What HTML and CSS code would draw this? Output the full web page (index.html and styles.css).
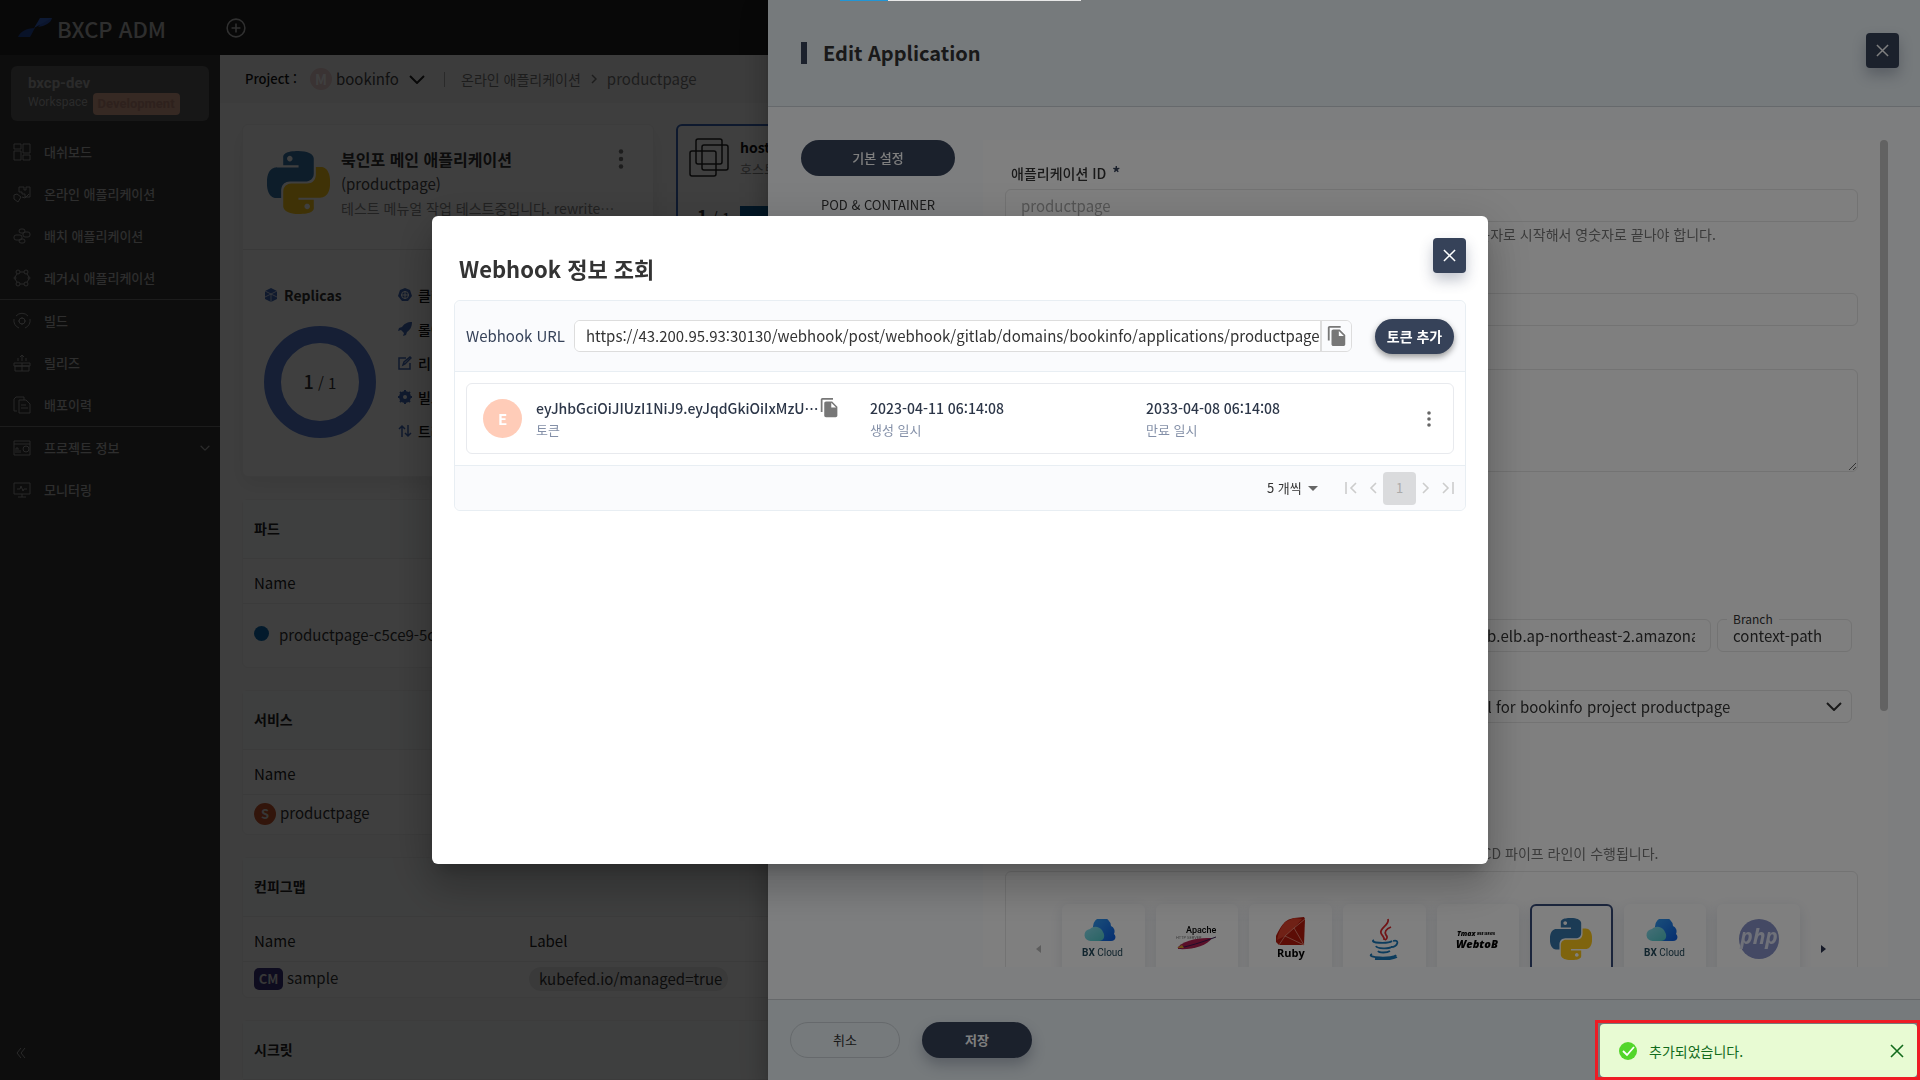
FILE: index.html
```html
<!DOCTYPE html>
<html lang="ko">
<head>
<meta charset="utf-8">
<title>BXCP ADM</title>
<link rel="stylesheet" href="styles.css">
</head>
<body>
<svg class="defs" aria-hidden="true">
  <symbol id="python" viewBox="0 0 24 24">
    <path fill="#3776ab" d="M14.25.18l.9.2.73.26.59.3.45.32.34.34.25.34.16.33.1.3.04.26.02.2-.01.13V8.5l-.05.63-.13.55-.21.46-.26.38-.3.31-.33.25-.35.19-.35.14-.33.1-.3.07-.26.04-.21.02H8.77l-.69.05-.59.14-.5.22-.41.27-.33.32-.27.35-.2.36-.15.37-.1.35-.07.32-.04.27-.02.21v3.06H3.17l-.21-.03-.28-.07-.32-.12-.35-.18-.36-.26-.36-.36-.35-.46-.32-.59-.28-.73-.21-.88-.14-1.05-.05-1.23.06-1.22.16-1.04.24-.87.32-.71.36-.57.4-.44.42-.33.42-.24.4-.16.36-.1.32-.05.24-.01h.16l.06.01h8.16v-.83H6.18l-.01-2.75-.02-.37.05-.34.11-.31.17-.28.25-.26.31-.23.38-.2.44-.18.51-.15.58-.12.64-.1.71-.06.77-.04.84-.02 1.27.05zm-6.3 1.98l-.23.33-.08.41.08.41.23.34.33.22.41.09.41-.09.33-.22.23-.34.08-.41-.08-.41-.23-.33-.33-.22-.41-.09-.41.09z"/>
    <path fill="#ffc91a" d="M21.04 6.11l.28.06.32.12.35.18.36.27.36.35.35.47.32.59.28.73.21.88.14 1.04.05 1.23-.06 1.23-.16 1.04-.24.86-.32.71-.36.57-.4.45-.42.33-.42.24-.4.16-.36.09-.32.05-.24.02-.16-.01h-8.22v.82h5.84l.01 2.76.02.36-.05.34-.11.31-.17.29-.25.25-.31.24-.38.2-.44.17-.51.15-.58.13-.64.09-.71.07-.77.04-.84.01-1.27-.04-1.07-.14-.9-.2-.73-.25-.59-.3-.45-.33-.34-.34-.25-.34-.16-.33-.1-.3-.04-.25-.02-.2.01-.13v-5.34l.05-.64.13-.54.21-.46.26-.38.3-.32.33-.24.35-.2.35-.14.33-.1.3-.06.26-.04.21-.02.13-.01h5.84l.69-.05.59-.14.5-.21.41-.28.33-.32.27-.35.2-.36.15-.36.1-.35.07-.32.04-.28.02-.21V6.07h2.09l.14.01zm-6.47 14.25l-.23.33-.08.41.08.41.23.33.33.23.41.08.41-.08.33-.23.23-.33.08-.41-.08-.41-.23-.33-.33-.23-.41-.08-.41.08z"/>
  </symbol>
  <symbol id="copy" viewBox="0 0 24 24"><path fill="currentColor" d="M16 1H4c-1.1 0-2 .9-2 2v14h2V3h12V1zm-1 4l6 6v10c0 1.1-.9 2-2 2H7.99C6.89 23 6 22.1 6 21V7c0-1.1.89-2 1.99-2h7zm-1 7h5.5L14 6.5V12z"/></symbol>
  <symbol id="close" viewBox="0 0 14 14"><path d="M1 1l12 12M13 1L1 13" fill="none" stroke="currentColor" stroke-width="1.6"/></symbol>
  <symbol id="down" viewBox="0 0 16 9"><path d="M1 1l7 7 7-7" fill="none" stroke="currentColor" stroke-width="2"/></symbol>
  <symbol id="dots" viewBox="0 0 4 16"><circle cx="2" cy="2" r="1.8" fill="currentColor"/><circle cx="2" cy="8" r="1.8" fill="currentColor"/><circle cx="2" cy="14" r="1.8" fill="currentColor"/></symbol>
  <linearGradient id="cloudDark" x1="0" y1="0" x2="1" y2="1"><stop offset="0" stop-color="#35a0f5"/><stop offset="1" stop-color="#0b5be0"/></linearGradient>
  <linearGradient id="cloudLight" x1="0" y1="0" x2="1" y2="1"><stop offset="0" stop-color="#8fe0f2"/><stop offset="1" stop-color="#4fc9c9"/></linearGradient>
  <symbol id="bxcloud" viewBox="0 0 44 40">
    <path fill="url(#cloudDark)" d="M12 8a9 9 0 0 1 18-1 6 6 0 0 1 3 8c3 3 1 7-3 7H15z"/>
    <path fill="url(#cloudLight)" d="M10 22a6 6 0 0 1-1-12 8 8 0 0 1 13 3c3 5 0 9-4 9z"/>
    <text x="1" y="37" font-size="10" fill="#234a5c" font-family="Roboto, sans-serif"><tspan font-weight="700">BX</tspan> Cloud</text>
  </symbol>
</svg>

<div class="app">
  <header class="topbar">
    <div class="brand">
      <svg width="34" height="20" viewBox="0 0 34 20"><path fill="#2c56b8" d="M22 0h12c-1 5-7 8-14 9 4-3 1-6 2-9z"/><path fill="#2348a0" d="M0 19c2-5 8-9 17-9-2 3-3 6-5 9z"/><path fill="#3464cc" d="M22 0h12L16 10z"/></svg>
      <span>BXCP ADM</span>
    </div>
    <button class="bare add" aria-label="추가"><svg width="20" height="20" viewBox="0 0 18 18" fill="none" stroke="currentColor" stroke-width="1.4"><circle cx="9" cy="9" r="8"/><path d="M9 5v8M5 9h8"/></svg></button>
  </header>

  <nav class="sidebar">
    <div class="workspace">
      <strong>bxcp-dev</strong>
      <p>Workspace <span>Development</span></p>
    </div>
    <ul>
      <li><a href="#"><svg viewBox="0 0 18 18"><path d="M1 1h7v5H1zM1 8h7v9H1zM10 1h7v9h-7zM10 12h7v5h-7z"/></svg>대쉬보드</a></li>
      <li><a href="#"><svg viewBox="0 0 18 18"><path d="M6 2h5v3h2V2h4v10h-5V9H9V7H6zM1 10l3-1 4 3-3 5-4-3zM9 12l3 1 4-4"/></svg>온라인 애플리케이션</a></li>
      <li><a href="#"><svg viewBox="0 0 18 18"><rect x="6" y="2" width="6" height="4" rx="2"/><rect x="10" y="5" width="7" height="5" rx="2"/><rect x="1" y="8" width="8" height="5" rx="2"/><rect x="6" y="12" width="6" height="4" rx="2"/></svg>배치 애플리케이션</a></li>
      <li><a href="#"><svg viewBox="0 0 18 18"><circle cx="5" cy="3" r="2"/><circle cx="13" cy="3" r="2"/><circle cx="2" cy="9" r="1"/><circle cx="16" cy="9" r="1"/><circle cx="5" cy="15" r="2"/><circle cx="13" cy="15" r="2"/><path d="M7 3h4M7 15h4M4 5L2 8M14 5l2 3M4 13l-2-3M14 13l2-3"/></svg>레거시 애플리케이션</a></li>
    </ul>
    <ul>
      <li><a href="#"><svg viewBox="0 0 18 18"><circle cx="9" cy="9" r="3"/><path d="M9 5v2M9 11v2M5 9h2M11 9h2M3 4a8 8 0 0 1 12 0M17 7a8 8 0 0 1-5 9M6 16a8 8 0 0 1-5-9"/></svg>빌드</a></li>
      <li><a href="#"><svg viewBox="0 0 18 18"><path d="M1 9h16v3H1zM2 12h14v5H2zM9 9v8M9 7V1M7 3l2-2 2 2M5 4v3M13 4v3"/></svg>릴리즈</a></li>
      <li><a href="#"><svg viewBox="0 0 18 18"><path d="M6 4h7l4 4v9H6zM4 15H1V3l2-2h8v3M8 9h5M8 12h7"/></svg>배포이력</a></li>
    </ul>
    <ul>
      <li><a href="#"><svg viewBox="0 0 18 18"><path d="M1 2h16v14H1zM1 5h16M3 14V9h2v5M7 14v-3"/><circle cx="13" cy="10" r="3"/></svg>프로젝트 정보<svg class="more" viewBox="0 0 16 9"><use href="#down"/></svg></a></li>
      <li><a href="#"><svg viewBox="0 0 18 18"><path d="M1 2h16v11H1zM5 16h8M9 13v3M4 8h3l1-3 2 5 1-2h3"/></svg>모니터링</a></li>
    </ul>
    <button class="bare collapse" aria-label="접기"><svg width="10" height="12" viewBox="0 0 10 12" fill="none" stroke="currentColor"><path d="M5 1L1 6l4 5M9 1L5 6l4 5"/></svg></button>
  </nav>

  <main class="main">
    <div class="crumbs">
      <span class="crumb-label">Project :</span>
      <span class="project-mark">M</span>
      <span class="project">bookinfo</span>
      <svg class="project-open" width="16" height="9"><use href="#down"/></svg>
      <span class="bar"></span>
      <a href="#">온라인 애플리케이션</a>
      <svg class="sep" width="6" height="10" viewBox="0 0 6 10" fill="none" stroke="currentColor" stroke-width="1.5"><path d="M1 1l4 4-4 4"/></svg>
      <span class="here">productpage</span>
    </div>

    <div class="content">
      <div class="overview">
        <section class="card app-card">
          <div class="app-head">
            <svg width="63" height="63"><use href="#python"/></svg>
            <div class="app-name">
              <h2>북인포 메인 애플리케이션</h2>
              <p>(productpage)</p>
              <p class="desc">테스트 메뉴얼 작업 테스트중입니다. rewrite⋯</p>
            </div>
            <button class="bare" aria-label="메뉴"><svg width="6" height="20"><use href="#dots"/></svg></button>
          </div>
          <div class="app-body">
            <div>
              <h3><svg width="14" height="14" viewBox="0 0 14 14"><path fill="#4169b8" d="M7 0l6 3v8l-6 3-6-3V3z"/><path d="M1 3l6 3 6-3M7 6v8M1 9l6-3 6 3" fill="none" stroke="#fff" stroke-width=".7"/></svg>Replicas</h3>
              <div class="ring"><p><b>1</b> / 1</p></div>
            </div>
            <ul class="facts">
              <li><svg viewBox="0 0 14 14"><path fill="#4169b8" d="M7 0l5 2 2 6-4 5H4L0 8l2-6z"/><g fill="none" stroke="#fff"><circle cx="7" cy="7" r="3.5"/><path d="M7 3v8M3 7h8"/></g></svg>클러스터</li>
              <li><svg viewBox="0 0 14 14"><path fill="#4169b8" d="M14 0C9 0 6 2 4 5L1 6 0 9l3-1 3 3-1 3 3-1 1-3c3-2 5-5 5-10z"/></svg>롤아웃</li>
              <li><svg viewBox="0 0 14 14" fill="none" stroke="#4169b8" stroke-width="1.5"><path d="M8 2H1v11h11V7M5 9l1-3 6-5 1 1-6 6z"/></svg>리비전</li>
              <li><svg viewBox="0 0 14 14"><circle cx="7" cy="7" r="4" fill="none" stroke="#4169b8" stroke-width="4"/><path stroke="#4169b8" stroke-width="2" d="M7 0v3M7 11v3M0 7h3M11 7h3M2 2l2 2M10 10l2 2M12 2l-2 2M4 10l-2 2"/></svg>빌드</li>
              <li><svg viewBox="0 0 14 14" fill="none" stroke="#4169b8" stroke-width="1.5"><path d="M4 13V2M1 5l3-3 3 3M10 1v11M7 9l3 3 3-3"/></svg>트래픽</li>
            </ul>
          </div>
        </section>
        <section class="card host-card">
          <div class="host-head">
            <svg width="40" height="40" viewBox="0 0 40 40" fill="none" stroke="#222" stroke-width="1.5"><rect x="7" y="1" width="26" height="25" rx="2"/><rect x="13" y="7" width="26" height="25" rx="2"/><rect x="1" y="13" width="26" height="25" rx="2"/></svg>
            <div><h3>host</h3><p>호스트</p></div>
          </div>
          <div class="host-body"><p><b>1</b> / 1</p><span></span></div>
        </section>
      </div>

      <section class="card list pods">
        <h3>파드</h3>
        <table>
          <thead><tr><th>Name</th><th></th></tr></thead>
          <tbody><tr><td><span class="dot"></span>productpage-c5ce9-5c6</td><td></td></tr></tbody>
        </table>
      </section>
      <section class="card list services">
        <h3>서비스</h3>
        <table>
          <thead><tr><th>Name</th><th></th></tr></thead>
          <tbody><tr><td><span class="kind svc">S</span>productpage</td><td></td></tr></tbody>
        </table>
      </section>
      <section class="card list maps">
        <h3>컨피그맵</h3>
        <table>
          <thead><tr><th>Name</th><th>Label</th></tr></thead>
          <tbody><tr><td><span class="kind cm">CM</span>sample</td><td><span class="tag">kubefed.io/managed=true</span></td></tr></tbody>
        </table>
      </section>
      <section class="card list"><h3>시크릿</h3></section>
    </div>
  </main>
</div>

<div class="layer layer-end">
  <aside class="drawer">
    <header class="drawer-head">
      <h1>Edit Application</h1>
      <button class="square" aria-label="닫기"><svg width="13" height="13"><use href="#close"/></svg></button>
    </header>
    <div class="drawer-body">
      <nav class="steps">
        <button class="pill">기본 설정</button>
        <button class="bare">POD &amp; CONTAINER</button>
      </nav>
      <form class="panel">
        <div class="fields">
          <div class="field"><label for="app-id">애플리케이션 ID <b>*</b></label><input id="app-id" placeholder="productpage">
            <p class="hint hint-id">영문 소문자, 숫자, 하이픈(-)만 사용할 수 있으며 영문자로 시작해서 영숫자로 끝나야 합니다.</p></div>
          <div class="field second"><label for="app-name">애플리케이션 이름</label><input id="app-name"></div>
          <div class="field third"><label for="app-desc">설명</label><textarea id="app-desc"></textarea></div>
          <div class="git">
            <label for="git-url">Git</label>
            <div class="git-row">
              <input id="git-url" value="https://gitlab-bb.elb.ap-northeast-2.amazonaws.com">
              <div class="outlined"><label for="branch">Branch</label><input id="branch" value="context-path"></div>
            </div>
            <div class="select"><select aria-label="Credential"><option>credential for bookinfo project productpage</option></select><svg width="16" height="9"><use href="#down"/></svg></div>
          </div>
          <p class="hint hint-ci">CI/CD 파이프 라인이 수행됩니다.</p>
          <div class="stacks">
            <button type="button" class="bare arrow off" aria-label="이전"><svg width="5" height="8"><path d="M5 0L0 4l5 4z" fill="currentColor"/></svg></button>
            <div class="tiles">
              <button type="button" class="tile"><svg width="44" height="40"><use href="#bxcloud"/></svg></button>
              <button type="button" class="tile"><svg width="42" height="38" viewBox="0 0 42 38"><text x="10" y="13" font-size="9" font-weight="500" font-family="Roboto, sans-serif">Apache</text><text x="0" y="19" font-size="4" fill="#777" font-family="Roboto, sans-serif">HTTP SERVER</text><path d="M2 27c8-8 22-9 34-9-5 8-20 12-34 11z" fill="#b41f52"/><path d="M4 28c9-2 20-5 36-11" stroke="#3b1a55" fill="none"/><path d="M1 28l5-3 2 3z" fill="#d8a030"/></svg></button>
              <button type="button" class="tile"><svg width="30" height="46" viewBox="0 0 30 46"><path fill="#b81a0c" d="M9 6q3-3 9-4l10-1 1 2-1 26H3L0 26V20Q4 11 9 6z"/><path fill="#e0422c" d="M9 6L18 2l8 1-8 9-9 8-8 4q2-11 8-18z"/><path d="M9 20l9-8 11-9M9 20l-6 9M9 20l19 9M18 12l10 17" stroke="#f29a88" fill="none" stroke-width=".8"/><text x="1" y="41" font-size="11" font-weight="700" font-family="Open Sans, sans-serif">Ruby</text></svg></button>
              <button type="button" class="tile"><svg width="30" height="42" viewBox="0 0 30 42" fill="none"><path d="M19 1c2 6-9 9-7 14 1 3 4 4 3 7M22 9c-5 2-7 5-5 8 2 2 1 4-1 5" stroke="#e22a2e" stroke-width="1.8"/><path d="M5 22c-6 3 14 4 18 1M7 28c1 3 13 3 15 1M9 33c1 2 9 2 12 0M3 36c-8 4 22 5 24 1M24 23c7-2 5 6-2 6M6 41c9 1 18 0 22-2" stroke="#1878ba" stroke-width="1.8"/></svg></button>
              <button type="button" class="tile"><svg width="46" height="22" viewBox="0 0 46 22" font-family="Open Sans, sans-serif" font-style="italic" font-weight="800"><text x="2" y="8" font-size="7">Tmax</text><text x="22" y="7" font-size="3">WEB SERVER</text><text x="1" y="20" font-size="11">WebtoB</text></svg></button>
              <button type="button" class="tile on"><svg width="42" height="42"><use href="#python"/></svg></button>
              <button type="button" class="tile"><svg width="44" height="40"><use href="#bxcloud"/></svg></button>
              <button type="button" class="tile"><svg width="42" height="42" viewBox="0 0 42 42"><circle cx="21" cy="21" r="20" fill="#8892c8"/><text x="21" y="26" text-anchor="middle" font-size="21" font-weight="700" font-style="italic" fill="#dfe2f2" font-family="Open Sans, sans-serif">php</text></svg></button>
            </div>
            <button type="button" class="bare arrow" aria-label="다음"><svg width="5" height="8"><path d="M0 0l5 4-5 4z" fill="currentColor"/></svg></button>
          </div>
        </div>
        <div class="scroll"></div>
      </form>
    </div>
    <footer class="drawer-foot">
      <button class="pill ghost">취소</button>
      <button class="pill save">저장</button>
    </footer>
  </aside>
</div>

<div class="layer layer-center">
  <div class="modal" role="dialog" aria-labelledby="modal-title">
    <header class="modal-head">
      <h1 id="modal-title">Webhook 정보 조회</h1>
      <button class="square" aria-label="닫기"><svg width="13" height="13"><use href="#close"/></svg></button>
    </header>
    <div class="hooks">
      <div class="hook-url">
        <label for="hook">Webhook URL</label>
        <div class="joined">
          <input id="hook" readonly value="https://43.200.95.93:30130/webhook/post/webhook/gitlab/domains/bookinfo/applications/productpage">
          <button aria-label="복사"><svg width="22" height="22"><use href="#copy"/></svg></button>
        </div>
        <button class="token-add">토큰 추가</button>
      </div>
      <div class="hook-list">
        <article class="token">
          <span class="avatar">E</span>
          <div><p class="value">eyJhbGciOiJIUzI1NiJ9.eyJqdGkiOiIxMzU⋯<button class="bare" aria-label="토큰 복사"><svg width="21" height="21"><use href="#copy"/></svg></button></p><p class="name">토큰</p></div>
          <div><p class="value">2023-04-11 06:14:08</p><p class="name">생성 일시</p></div>
          <div><p class="value">2033-04-08 06:14:08</p><p class="name">만료 일시</p></div>
          <button class="bare kebab" aria-label="메뉴"><svg width="4" height="16"><use href="#dots"/></svg></button>
        </article>
      </div>
      <div class="pager">
        <div class="page-size"><select aria-label="페이지 크기"><option>5 개씩</option></select><svg width="10" height="5" viewBox="0 0 10 5"><path d="M0 0l5 5 5-5z" fill="#666"/></svg></div>
        <button class="bare" aria-label="처음"><svg width="12" height="12" viewBox="0 0 12 12"><path d="M1 0v12M11 1L6 6l5 5"/></svg></button>
        <button class="bare" aria-label="이전"><svg width="8" height="12" viewBox="0 0 8 12"><path d="M7 1L2 6l5 5"/></svg></button>
        <button class="page">1</button>
        <button class="bare" aria-label="다음"><svg width="8" height="12" viewBox="0 0 8 12"><path d="M1 1l5 5-5 5"/></svg></button>
        <button class="bare" aria-label="마지막"><svg width="12" height="12" viewBox="0 0 12 12"><path d="M11 0v12M1 1l5 5-5 5"/></svg></button>
      </div>
    </div>
  </div>
</div>

<div class="progress"><span></span></div>

<div class="toast-frame">
  <div class="toast" role="status">
    <svg width="18" height="18" viewBox="0 0 18 18"><circle cx="9" cy="9" r="9" fill="#52d62a"/><path d="M4 9l4 4 7-8" fill="none" stroke="#fff" stroke-width="1.8"/></svg>
    <span>추가되었습니다.</span>
    <button class="bare" aria-label="닫기"><svg width="14" height="14"><use href="#close"/></svg></button>
  </div>
</div>
</body>
</html>
```
FILE: styles.css
```css
* { box-sizing: border-box; }
body, h1, h2, h3, p, ul { margin: 0; padding: 0; }
ul { list-style: none; }
body, button, input, select, textarea {
  font-family: "Noto Sans CJK KR", "Noto Sans", sans-serif;
  font-size: 15px;
  line-height: 20px;
  color: #333;
}
body { overflow: hidden; }
svg { display: block; flex: none; }
a { color: inherit; text-decoration: none; }
input, textarea, select { border: 1px solid #ddd; border-radius: 6px; background: #fff; min-width: 0; outline: 0; }
.defs { position: absolute; width: 0; height: 0; }
.bare { border: 0; padding: 0; background: none; display: flex; align-items: center; justify-content: center; color: #777; }

/* application shell */
.app {
  display: grid;
  grid-template: 55px minmax(0, 1fr) / 220px 1fr;
  height: 100vh;
  overflow: hidden;
}
.topbar { grid-column: 1 / -1; display: flex; align-items: center; background: #202020; color: #b8b8b8; }
.brand { display: flex; align-items: center; gap: 5px; width: 208px; padding-left: 18px; margin-right: 18px; font-size: 22px; font-weight: 500; line-height: 32px; }
.add { color: #c0c0c0; }

.sidebar { display: flex; flex-direction: column; background: #343434; color: #b8b8b8; padding-top: 11px; }
.workspace { margin: 0 11px 10px; height: 55px; padding: 7px 17px; border-radius: 6px; background: #5c5c5c; font-family: Roboto, sans-serif; color: #aaa; }
.workspace strong { display: block; font-size: 15px; }
.workspace p { font-size: 12px; line-height: 18px; display: flex; gap: 5px; align-items: flex-start; }
.workspace span { padding: 2px 5px; border-radius: 4px; background: #d8a48c; color: #b98574; font-size: 13px; font-weight: 700; }
.sidebar ul + ul { border-top: 1px solid #707070; }
.sidebar li a { display: flex; align-items: center; height: 42px; padding: 0 10px 0 13px; gap: 13px; font-size: 13px; font-weight: 500; }
.sidebar li svg { width: 18px; height: 18px; fill: none; stroke: #a0a0a0; stroke-width: 1; }
.sidebar li .more { width: 10px; height: 6px; margin-left: auto; color: #aaa; }
.collapse { margin-top: auto; margin-bottom: 21px; width: 42px; color: #aaa; }

.main { background: #fbfbfb; min-width: 0; overflow: hidden; }
.crumbs { display: flex; align-items: center; height: 48px; padding-left: 25px; background: #f3f3f3; }
.crumb-label { width: 65px; font-weight: 500; font-size: 13px; color: #111; }
.project-mark { width: 22px; height: 22px; border-radius: 50%; margin-right: 4px; background: #e8cccc; color: #fff; font-size: 14px; line-height: 22px; font-weight: 700; text-align: center; }
.project { width: 73px; font-size: 15px; color: #444; }
.project-open { color: #222; }
.bar { width: 1px; height: 15px; margin: 0 16px 0 19px; background: #aaa; }
.crumbs a { font-size: 14px; color: #777; }
.sep { margin: 0 10px; color: #777; }
.here { color: #777; }

.content { padding: 21px 22px; display: flex; flex-direction: column; gap: 22px; }
.card { flex: none; background: #fff; border: 1px solid #f0f0f0; border-radius: 6px; }
.overview { display: flex; gap: 22px; align-items: flex-start; }
.app-card { width: 412px; height: 353px; box-shadow: 0 8px 20px rgba(0, 0, 0, .08); }
.app-head { display: flex; height: 125px; padding: 26px 0 0 24px; border-bottom: 1px solid #e4e4e4; }
.app-name { width: 277px; margin: -4px 0 0 11px; color: #444; }
.app-name h2 { font-size: 16px; line-height: 24px; color: #333; }
.app-name p { line-height: 25px; }
.app-name .desc { font-size: 14px; color: #888; white-space: nowrap; }
.app-head .bare { align-self: flex-start; margin-top: -2px; }
.app-body { display: flex; padding: 35px 0 0 21px; }
.app-body h3 { display: flex; align-items: center; gap: 6px; font-size: 14px; font-weight: 700; color: #333; }
.ring { margin-top: 21px; width: 112px; height: 112px; border: 17px solid #5a7fd6; border-radius: 50%; display: grid; place-items: center; }
.ring b { font-size: 18px; font-weight: 500; }
.facts { margin-left: 22px; width: 100px; }
.facts li { display: flex; align-items: center; gap: 6px; height: 20px; margin-bottom: 14px; font-size: 14px; font-weight: 500; color: #111; }
.facts svg { width: 14px; height: 14px; }
.host-card { flex: 1; height: 353px; border: 2px solid #3a66b8; padding: 12px 11px; }
.host-head { display: flex; gap: 11px; }
.host-head h3 { font-size: 14px; line-height: 18px; color: #111; }
.host-head p { font-size: 13px; line-height: 26px; color: #888; }
.host-body { display: flex; margin-top: 24px; }
.host-body p { width: 51px; padding-left: 8px; }
.host-body b { font-size: 18px; }
.host-body span { flex: 1; height: 24px; background: #0b5c98; }

.list h3 { height: 59px; padding: 18px 11px; font-size: 14px; color: #222; background: #fafcfd; border-bottom: 1px solid #eee; }
.list table { width: 100%; border-collapse: collapse; table-layout: fixed; }
.list th { height: 44px; padding: 4px 11px 0; font-weight: 400; text-align: left; border-bottom: 1px solid #eee; color: #222; }
.list th:first-child { width: 276px; }
.list td { height: 36px; padding: 0 11px; }
.list td + td, .list th + th { padding-left: 10px; }
.pods td { height: 64px; }
.services td { height: 40px; }
.dot { display: inline-block; width: 15px; height: 15px; margin-right: 10px; border-radius: 50%; background: #0f6bb0; }
.kind { display: inline-block; height: 22px; margin-right: 4px; color: #ddd; font-size: 13px; font-weight: 700; line-height: 22px; text-align: center; }
.svc { width: 22px; border-radius: 50%; background: #c8562c; }
.cm { width: 29px; border-radius: 5px; background: #38307c; }
.tag { display: inline-block; padding: 2px 6px 2px 10px; border-radius: 12px; background: #eaeaea; }

/* dimmed layers */
.layer { position: fixed; inset: 0; display: flex; background: rgba(0, 0, 0, .5); }
.layer-end { justify-content: flex-end; }
.layer-center { align-items: center; justify-content: center; }

.square { width: 33px; height: 35px; padding: 0; border: 0; border-radius: 4px; display: grid; place-items: center; background: #364259; color: #fff; box-shadow: 0 7px 14px rgba(50, 60, 90, .3); }
.pill { height: 36px; border: 0; border-radius: 18px; background: #364259; color: #fff; font-size: 13px; font-weight: 500; }

.drawer { width: 60%; display: flex; flex-direction: column; background: #fafcff; box-shadow: 0 8px 10px -5px rgba(0, 0, 0, .2), 0 16px 24px 2px rgba(0, 0, 0, .14), 0 6px 30px 5px rgba(0, 0, 0, .12); }
.drawer-head { display: flex; justify-content: space-between; height: 107px; padding: 33px 21px 0 33px; background: #ecf4f8; border-bottom: 1px solid #ccd3d8; }
.drawer-head h1 { height: 22px; margin-top: 9px; padding-left: 16px; border-left: 6px solid #364259; font-size: 20px; line-height: 22px; font-weight: 700; }
.drawer-body { flex: 1; display: flex; gap: 28px; min-height: 0; padding: 33px 32px 32px 33px; }
.steps { width: 154px; display: flex; flex-direction: column; gap: 19px; }
.steps .bare { font-size: 13px; color: #333; }
.panel { flex: 1; display: flex; justify-content: space-between; overflow: hidden; background: #fff; }
.fields { flex: 1; min-width: 0; padding: 22px 22px 0; }
.scroll { width: 8px; height: 69%; border-radius: 4px; background: #c4c4c4; }
.field { display: flex; flex-direction: column; }
.field label, .git > label { padding-left: 6px; margin-bottom: 6px; font-size: 14px; font-weight: 500; }
.field label b { margin-left: 2px; font-size: 16px; color: #364259; }
.fields input, .fields select { height: 33px; padding: 0 15px; border-color: #e6e6e6; }
.fields input::placeholder { color: #aaa; }
.fields textarea { height: 103px; border-color: #e6e6e6; resize: vertical; }
.hint { font-size: 14px; color: #777; white-space: nowrap; }
.hint-id { margin-top: 2px; padding-left: 178px; }
.second { margin-top: 23px; }
.third { margin-top: 17px; }
.git { margin-top: 121px; padding-right: 6px; display: flex; flex-direction: column; }
.git-row { display: flex; gap: 6px; }
.git-row > input { flex: 1; padding-left: 374px; }
.outlined { position: relative; width: 135px; display: flex; }
.outlined label { position: absolute; left: 10px; top: -9px; padding: 0 6px; background: #fff; font-size: 12px; font-weight: 400; line-height: 18px; }
.outlined input { width: 100%; }
.select { position: relative; display: flex; margin-top: 38px; }
.select select { appearance: none; width: 100%; padding-left: 415px; }
.select svg { position: absolute; right: 10px; top: 12px; }
.hint-ci { margin-top: 120px; padding-left: 459px; }
.stacks { display: flex; align-items: flex-start; margin-top: 8px; height: 300px; padding: 32px 31px 0 30px; border: 1px solid #e6e6e6; border-radius: 6px; }
.tiles { flex: 1; display: grid; grid-template-columns: repeat(8, 1fr); gap: 11px; margin: 0 21px; }
.tile { min-width: 0; height: 120px; padding: 0 0 50px; display: flex; align-items: center; justify-content: center; border: 0; border-radius: 6px; background: #fff; box-shadow: 0 4px 14px rgba(60, 80, 120, .16); }
.tile.on { border: 2px solid #364a78; }
.arrow { height: 90px; color: #2c3550; }
.arrow.off { color: #bbb; }
.drawer-foot { display: flex; gap: 22px; height: 81px; padding: 22px; background: #ecf4f8; border-top: 1px solid #ccd0d4; }
.drawer-foot .pill { width: 110px; }
.drawer-foot .ghost { border: 1px solid #ccd3d8; background: none; color: #333; font-weight: 400; }
.drawer-foot .save { box-shadow: 0 7px 14px rgba(50, 60, 90, .3); font-weight: 700; }

.modal { width: 55%; height: 60%; min-height: 320px; padding: 22px; border-radius: 6px; background: #fff; box-shadow: 0 11px 15px -7px rgba(0, 0, 0, .2), 0 24px 38px 3px rgba(0, 0, 0, .14), 0 9px 46px 8px rgba(0, 0, 0, .12); }
.modal-head { display: flex; justify-content: space-between; height: 62px; padding-left: 5px; }
.modal-head h1 { margin-top: 14px; font-size: 22px; line-height: 32px; font-weight: 700; }
.hooks { border: 1px solid #e8eef3; border-radius: 6px; }
.hook-url { display: flex; align-items: center; height: 71px; padding: 0 11px; background: #fafbfd; border-bottom: 1px solid #e8eef3; border-radius: 6px 6px 0 0; }
.hook-url label { width: 108px; color: #364259; }
.joined { flex: 1; display: flex; height: 32px; margin-right: 23px; border: 1px solid #ddd; border-radius: 6px; overflow: hidden; }
.joined input { flex: 1; border: 0; border-radius: 0; padding: 0 0 0 11px; }
.joined button { display: grid; place-items: center; width: 31px; padding: 0; border: 0; border-left: 2px solid #ddd; background: #fafbfd; color: #777; }
.token-add { width: 79px; height: 35px; padding: 0; border: 0; border-radius: 18px; background: #364259; color: #fff; font-size: 14px; font-weight: 700; box-shadow: 0 3px 6px rgba(0, 0, 0, .4); }
.hook-list { padding: 11px; }
.token { display: grid; grid-template-columns: 53px 334px 276px 1fr 4px; align-items: center; height: 71px; padding: 0 22px 0 16px; border: 1px solid #e8eaee; border-radius: 6px; }
.avatar { width: 39px; height: 39px; border-radius: 50%; background: #ffccb8; color: #fff; font-weight: 700; line-height: 39px; text-align: center; }
.token .value { display: flex; align-items: center; height: 22px; font-size: 14px; font-weight: 500; color: #2c3648; }
.token .name { font-size: 13px; line-height: 22px; color: #8490a8; }
.kebab { color: #666; }
.pager { display: flex; align-items: center; justify-content: flex-end; gap: 12px; height: 45px; padding-right: 11px; background: #fafbfd; border-top: 1px solid #e8eef3; border-radius: 0 0 6px 6px; }
.pager .bare svg { fill: none; stroke: #ccc; stroke-width: 1.6; }
.page-size { display: flex; align-items: center; gap: 6px; margin-right: 15px; }
.page-size select { appearance: none; border: 0; padding: 0; background: none; font-size: 13px; }
.page { width: 33px; height: 33px; margin: 0 -6px; padding: 0; border: 0; border-radius: 4px; background: #dadbdd; color: #aaa; font-size: 13px; }

/* page load indicator */
.progress { position: fixed; top: 0; left: 840px; width: 241px; height: 1px; background: #e8e8e8; }
.progress span { display: block; width: 20%; height: 1px; background: #2295d4; }

.toast-frame { position: fixed; right: 0; bottom: 0; width: 325px; height: 60px; padding: 1px 0 0 2px; border: 3px solid #ee1c25; }
.toast { display: flex; align-items: center; gap: 12px; height: 53px; padding: 0 13px 0 19px; border-radius: 4px; background: #e8fbd3; color: #126b1c; font-size: 14px; }
.toast .bare { margin-left: auto; color: #126b1c; }
```
